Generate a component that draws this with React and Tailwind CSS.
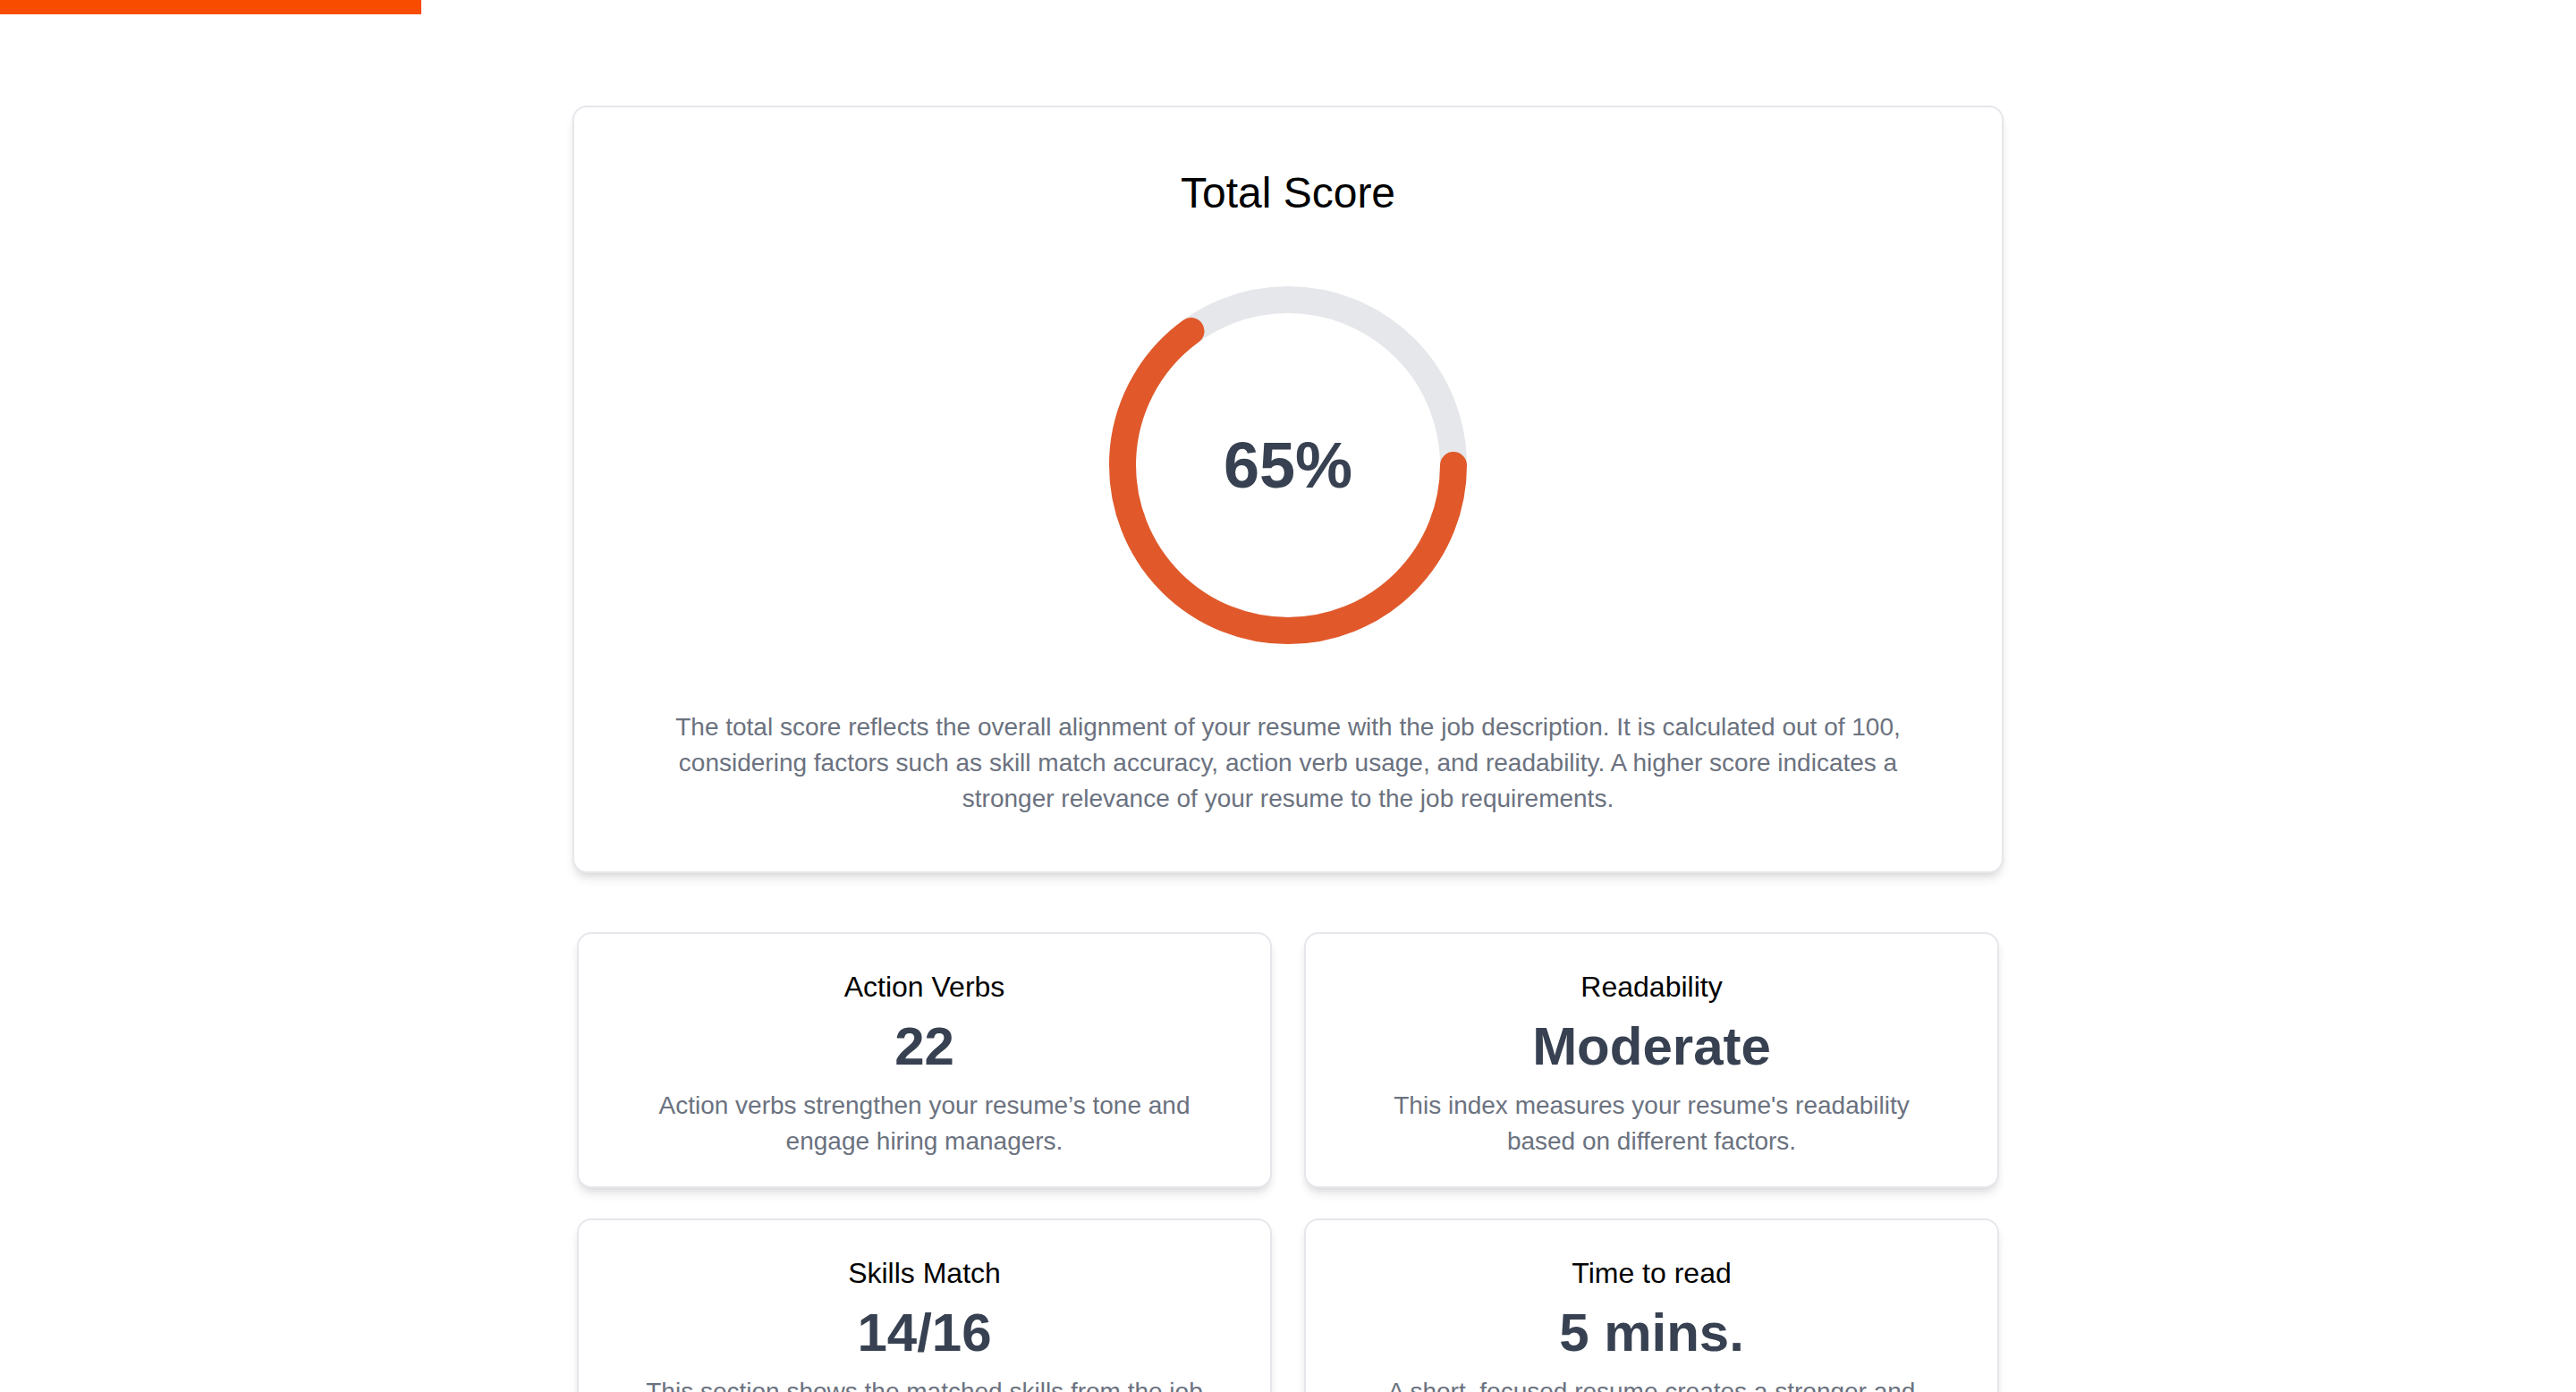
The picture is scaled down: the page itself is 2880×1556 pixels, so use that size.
const stats = [
  { title: 'Action Verbs', value: '22', text: 'Action verbs strengthen your resume’s tone and engage hiring managers.' },
  { title: 'Readability', value: 'Moderate', text: "This index measures your resume's readability based on different factors." },
  { title: 'Skills Match', value: '14/16', text: 'This section shows the matched skills from the job description that appear in your resume.' },
  { title: 'Time to read', value: '5 mins.', text: 'A short, focused resume creates a stronger and more lasting impression on recruiters.' },
]

export default function App() {
  return (
    <div className="min-h-screen bg-white font-['Liberation_Sans',Arial,sans-serif]">
      <div className="h-4 w-[471px] bg-[#f84c00]" />
      <main className="w-[1600px] mx-auto mt-[102px] pb-24">
        <TotalScore score={65} />
        <div className="mt-[66px] px-[5px] grid grid-cols-2 gap-x-[36px] gap-y-[34px]">
          {stats.map(s => <StatCard key={s.title} {...s} />)}
        </div>
      </main>
    </div>
  )
}

function TotalScore({ score }) {
  return (
    <section className="rounded-2xl border-2 border-[#e5e7eb] bg-white px-16 pt-16 pb-[61px] text-center shadow-[0_8px_12px_-2px_rgba(0,0,0,0.1),0_4px_8px_-4px_rgba(0,0,0,0.1)]">
      <h2 className="text-[48px] leading-[64px] text-black">Total Score</h2>
      <div className="mt-[72px] flex justify-center">
        <Ring pct={score} />
      </div>
      <p className="mt-[73px] text-[28px] leading-[40px] text-[#6b7280]">
        The total score reflects the overall alignment of your resume with the job description. It is calculated out of 100, considering factors such as skill match accuracy, action verb usage, and readability. A higher score indicates a stronger relevance of your resume to the job requirements.
      </p>
    </section>
  )
}

function Ring({ pct }) {
  const r = 185
  const c = 2 * Math.PI * r
  return (
    <div className="relative w-[400px] h-[400px]">
      <svg width="400" height="400" viewBox="0 0 400 400">
        <circle cx="200" cy="200" r={r} fill="none" stroke="#e5e7eb" strokeWidth="30" />
        <circle
          cx="200" cy="200" r={r} fill="none" stroke="#e1592a" strokeWidth="30"
          strokeLinecap="round" strokeDasharray={`${(c * pct) / 100} ${c}`}
        />
      </svg>
      <div className="absolute inset-0 flex items-center justify-center text-[72px] leading-none font-bold text-[#374151]">
        {pct}%
      </div>
    </div>
  )
}

function StatCard({ title, value, text }) {
  return (
    <div className="rounded-2xl border-2 border-[#e5e7eb] bg-white px-8 pt-[35px] pb-[30px] text-center shadow-[0_8px_12px_-2px_rgba(0,0,0,0.1),0_4px_8px_-4px_rgba(0,0,0,0.1)]">
      <div className="text-[32px] leading-[48px] text-black">{title}</div>
      <div className="mt-[7px] text-[60px] leading-[72px] font-bold text-[#374151]">{value}</div>
      <p className="mt-[10px] mx-auto max-w-[640px] text-[28px] leading-[40px] text-[#6b7280]">{text}</p>
    </div>
  )
}
